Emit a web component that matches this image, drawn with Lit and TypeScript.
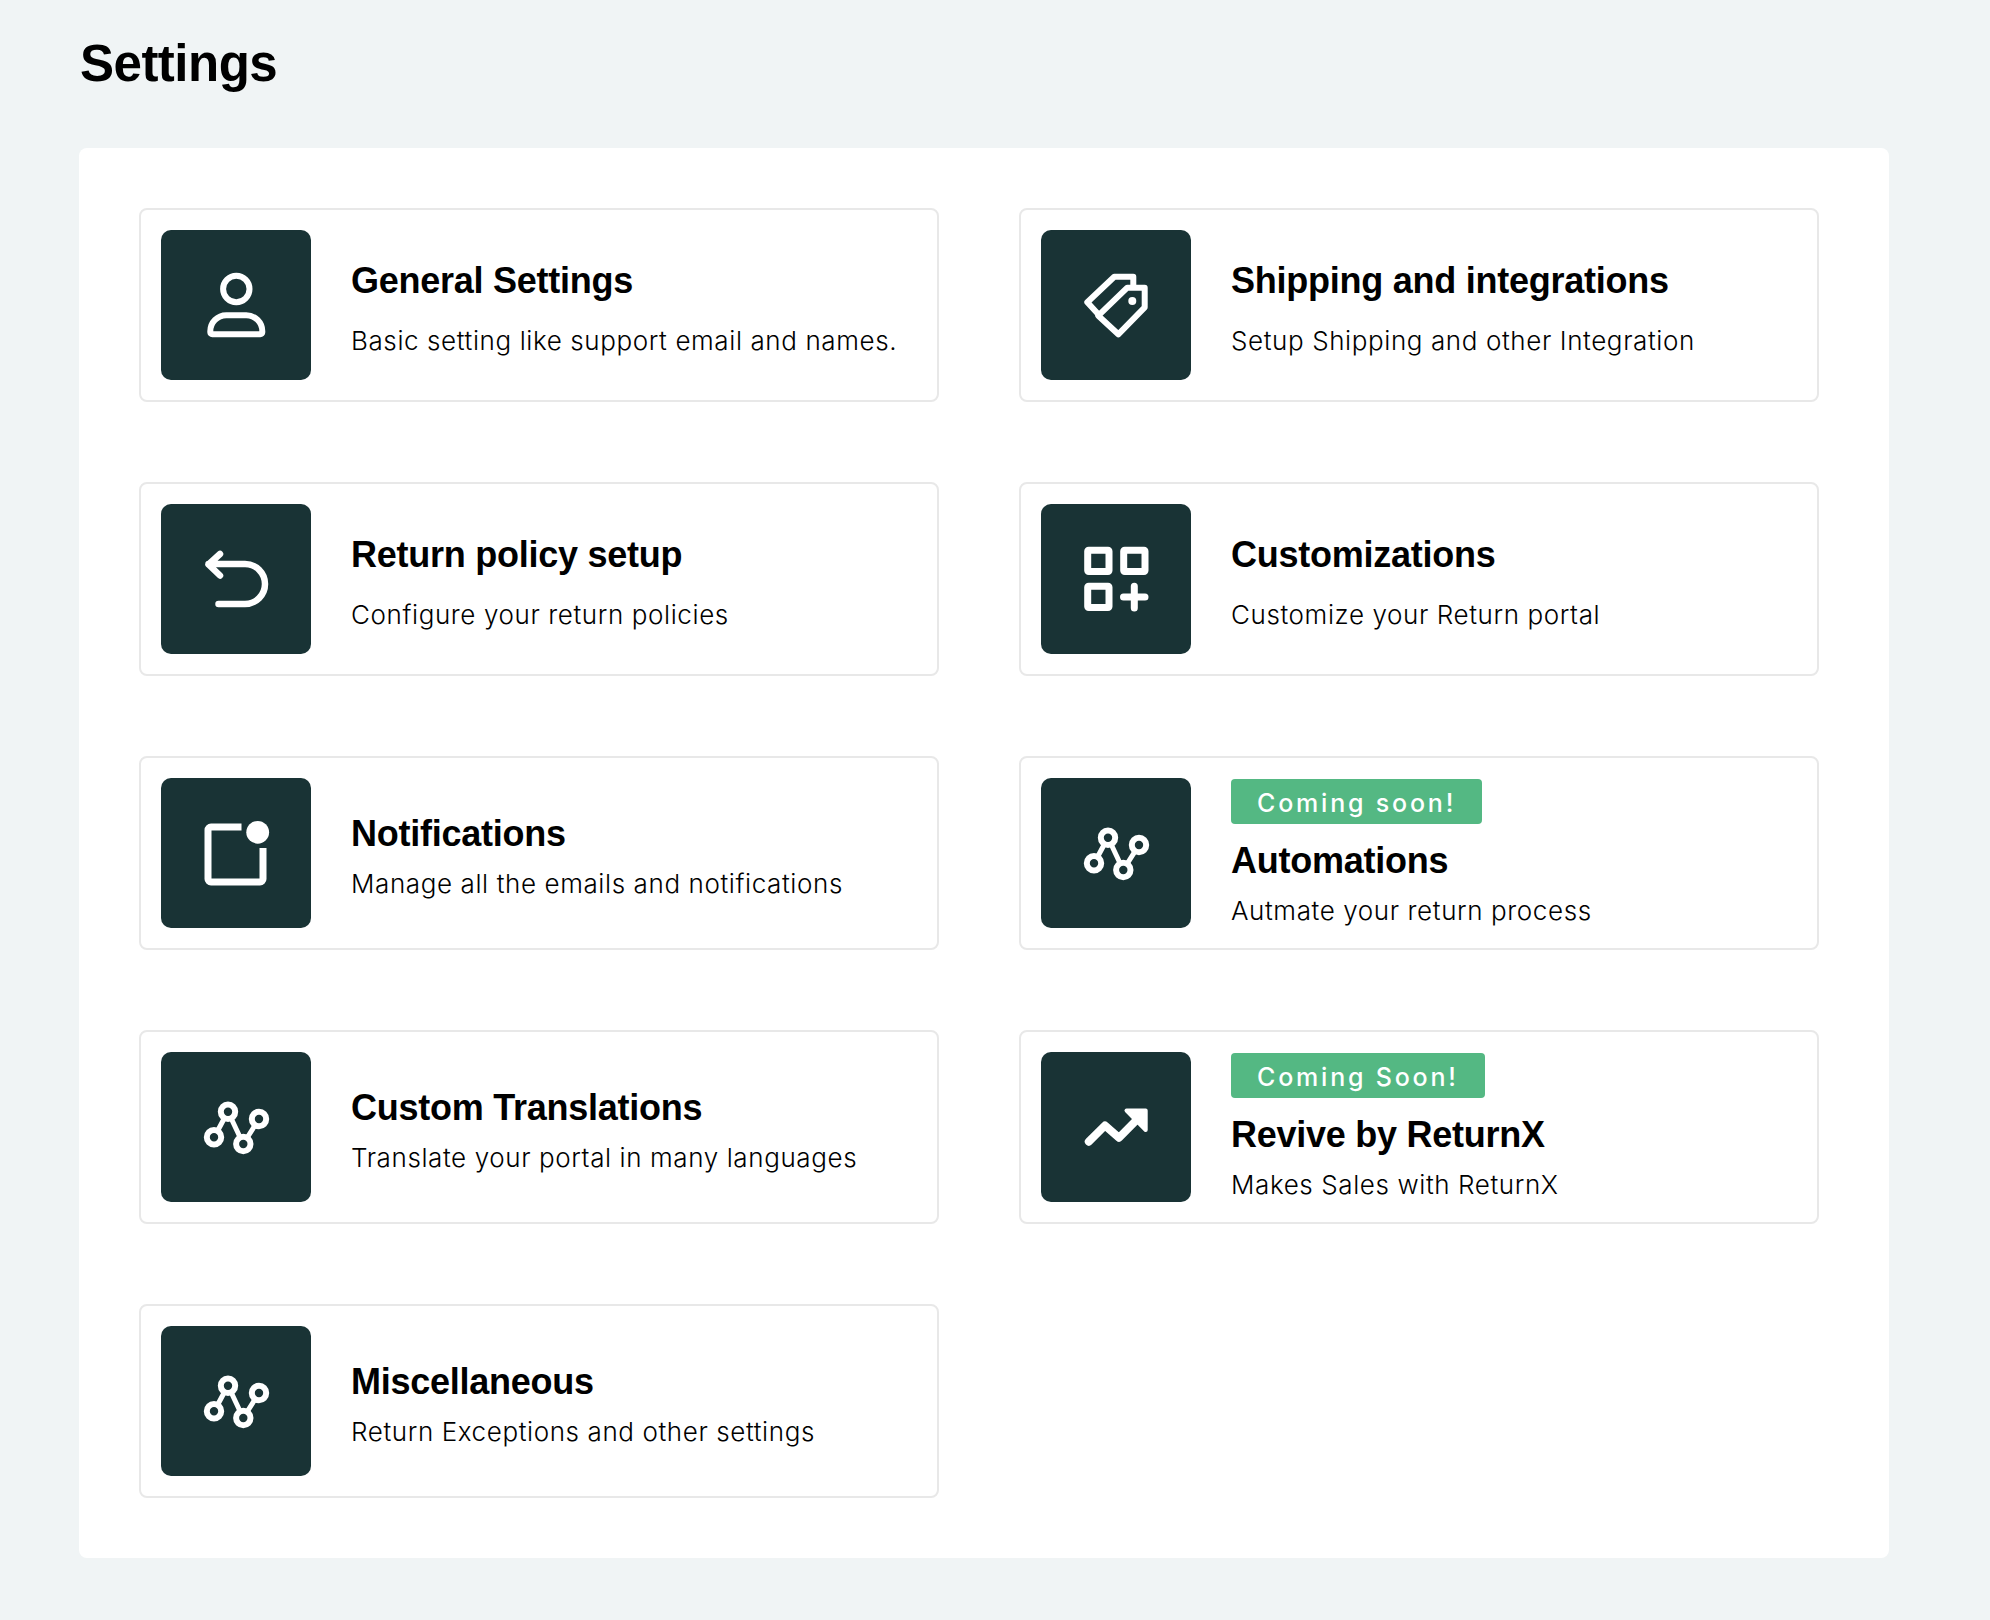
import { LitElement, css, html, svg } from 'lit';
import { customElement } from 'lit/decorators.js';

const nodes = svg`
  <g fill="none" stroke="#fff" stroke-width="6" stroke-linecap="butt">
    <circle cx="67" cy="59.7" r="7.2"></circle>
    <circle cx="53" cy="85.3" r="7.2"></circle>
    <circle cx="82.3" cy="92" r="7.2"></circle>
    <circle cx="98" cy="67" r="7.2"></circle>
    <path d="M56.4 79.2 63.6 65.8M70 66 79.3 85.7M86 86 94.3 72.9" stroke-width="5"></path>
  </g>`;

const icons = {
  person: svg`
    <g fill="none" stroke="#fff" stroke-width="6">
      <circle cx="75.3" cy="59" r="13.2"></circle>
      <path d="M65.3 85.3H85.3a16 16 0 0 1 16 16v1a2 2 0 0 1-2 2H51.3a2 2 0 0 1-2-2v-1a16 16 0 0 1 16-16z"></path>
    </g>`,
  tag: svg`
    <g fill="none" stroke="#fff" stroke-width="6" stroke-linejoin="round">
      <path d="M103.7 57.7H86.3L57.3 85.7 77.3 104.3 103.7 77.3z"></path>
      <path d="M92.3 55V46.7H73.3L46.3 72.3 57.3 84.3"></path>
    </g>
    <circle cx="91.3" cy="71" r="4" fill="#fff"></circle>`,
  undo: svg`
    <path d="M59 50 47.5 60.5 59 71.5M47.5 60H84A20 20 0 0 1 84 100H57.5"
      fill="none" stroke="#fff" stroke-width="6.5" stroke-linecap="round" stroke-linejoin="round"></path>`,
  grid: svg`
    <g fill="none" stroke="#fff" stroke-width="7" stroke-linejoin="round">
      <rect x="46.7" y="46.3" width="21.3" height="21.3" rx="1"></rect>
      <rect x="82.7" y="46.3" width="21.3" height="21.3" rx="1"></rect>
      <rect x="46.7" y="82.3" width="21.3" height="21.3" rx="1"></rect>
      <path d="M82.5 93H104M93.3 82.3V104" stroke-linecap="round"></path>
    </g>`,
  notify: svg`
    <path d="M80.5 49H50a3 3 0 0 0-3 3V101a3 3 0 0 0 3 3H99a3 3 0 0 0 3-3V70" fill="none" stroke="#fff" stroke-width="7"></path>
    <circle cx="96.7" cy="54.3" r="11.4" fill="#fff"></circle>`,
  nodes,
  trend: svg`
    <path d="M47.8 89.7 64 73.5 78 85.8 97.3 66.3" fill="none" stroke="#fff" stroke-width="8" stroke-linecap="round" stroke-linejoin="round"></path>
    <path d="M85.5 58.5H104.7V78z" fill="#fff" stroke="#fff" stroke-width="4" stroke-linejoin="round"></path>`,
};

type Item = {
  icon: keyof typeof icons;
  title: string;
  desc: string;
  badge?: string;
  roomy?: boolean;
};

const items: Item[] = [
  { icon: 'person', title: 'General Settings', desc: 'Basic setting like support email and names.', roomy: true },
  { icon: 'tag', title: 'Shipping and integrations', desc: 'Setup Shipping and other Integration', roomy: true },
  { icon: 'undo', title: 'Return policy setup', desc: 'Configure your return policies', roomy: true },
  { icon: 'grid', title: 'Customizations', desc: 'Customize your Return portal', roomy: true },
  { icon: 'notify', title: 'Notifications', desc: 'Manage all the emails and notifications' },
  { icon: 'nodes', title: 'Automations', desc: 'Autmate your return process', badge: 'Coming soon!' },
  { icon: 'nodes', title: 'Custom Translations', desc: 'Translate your portal in many languages' },
  { icon: 'trend', title: 'Revive by ReturnX', desc: 'Makes Sales with ReturnX', badge: 'Coming Soon!' },
  { icon: 'nodes', title: 'Miscellaneous', desc: 'Return Exceptions and other settings' },
];

@customElement('app-root')
export class AppRoot extends LitElement {
  static styles = css`
    :host {
      display: block;
      min-height: 1620px;
      box-sizing: border-box;
      padding: 0 0 62px 79px;
      background: #f0f4f5;
      color: #000;
      font-family: 'Liberation Sans', Arial, sans-serif;
    }

    h1 {
      margin: 0;
      height: 148px;
      box-sizing: border-box;
      padding: 32px 0 0 1px;
      line-height: 64px;
      font-size: 51px;
      font-weight: 700;
      letter-spacing: -0.5px;
    }

    .panel {
      width: 1810px;
      box-sizing: border-box;
      padding: 60px;
      background: #fff;
      border-radius: 8px;
    }

    .grid {
      display: grid;
      grid-template-columns: 800px 800px;
      gap: 80px;
    }

    .card {
      display: flex;
      align-items: center;
      gap: 40px;
      height: 194px;
      box-sizing: border-box;
      padding: 20px;
      border: 2px solid #e8e8e8;
      border-radius: 8px;
    }

    .icon {
      flex: none;
      display: flex;
      width: 150px;
      height: 150px;
      border-radius: 10px;
      background: #193335;
    }

    .icon svg {
      width: 150px;
      height: 150px;
    }

    .text {
      padding-top: 5px;
    }

    .text.has-badge {
      padding-top: 0;
    }

    .badge {
      display: inline-block;
      height: 45px;
      line-height: 49px;
      padding: 0 26px;
      margin-bottom: 15px;
      vertical-align: top;
      border-radius: 4px;
      background: #54b883;
      color: #fff;
      font-family: Inter, sans-serif;
      font-size: 25px;
      font-weight: 500;
      letter-spacing: 2.8px;
    }

    .title {
      font-size: 36px;
      line-height: 44px;
      font-weight: 700;
      letter-spacing: -0.25px;
    }

    .desc {
      margin-top: 12px;
      font-family: Inter, sans-serif;
      font-size: 26px;
      line-height: 32px;
      font-weight: 300;
      letter-spacing: 0.6px;
    }

    .roomy .desc {
      margin-top: 22px;
    }
  `;

  render() {
    return html`
      <h1>Settings</h1>
      <div class="panel">
        <div class="grid">
          ${items.map(
            (item) => html`
              <div class="card ${item.roomy ? 'roomy' : ''}">
                <div class="icon">
                  <svg viewBox="0 0 150 150">${icons[item.icon]}</svg>
                </div>
                <div class="text ${item.badge ? 'has-badge' : ''}">
                  ${item.badge ? html`<div class="badge">${item.badge}</div>` : ''}
                  <div class="title">${item.title}</div>
                  <div class="desc">${item.desc}</div>
                </div>
              </div>
            `,
          )}
        </div>
      </div>
    `;
  }
}
